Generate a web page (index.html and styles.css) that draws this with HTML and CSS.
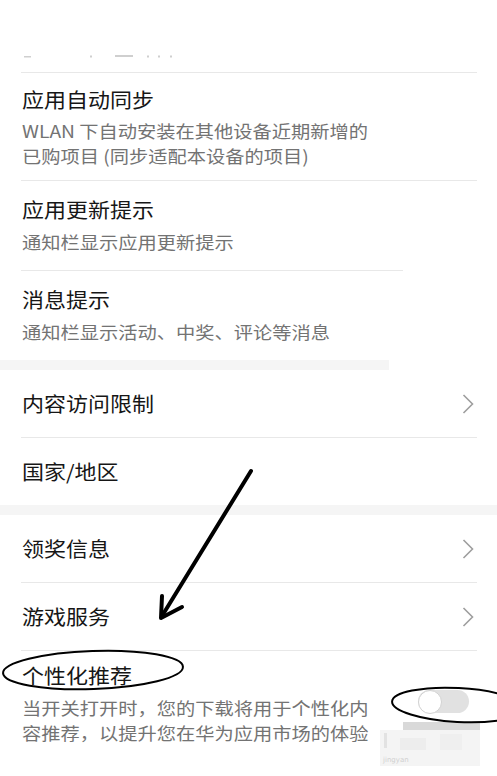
FILE: index.html
```html
<!DOCTYPE html>
<html lang="zh-CN">
<head>
<meta charset="utf-8">
<title>设置</title>
<link rel="stylesheet" href="styles.css">
</head>
<body>
<div class="page">
  <div class="top-space"></div>
  <div class="divider"></div>

  <div class="item item--first">
    <div class="title">应用自动同步</div>
    <div class="sub">WLAN 下自动安装在其他设备近期新增的<br>已购项目 (同步适配本设备的项目)</div>
  </div>
  <div class="divider"></div>

  <div class="item item--single">
    <div class="title">应用更新提示</div>
    <div class="sub">通知栏显示应用更新提示</div>
  </div>
  <div class="divider divider--short"></div>

  <div class="item item--single">
    <div class="title">消息提示</div>
    <div class="sub">通知栏显示活动、中奖、评论等消息</div>
  </div>
  <div class="band band--partial"></div>

  <div class="row">
    <span class="title">内容访问限制</span>
    <svg class="chevron" viewBox="0 0 12 20"><polyline points="1.5,1 10.5,10 1.5,19"/></svg>
  </div>
  <div class="divider"></div>

  <div class="row">
    <span class="title">国家/地区</span>
  </div>
  <div class="band"></div>

  <div class="row">
    <span class="title">领奖信息</span>
    <svg class="chevron" viewBox="0 0 12 20"><polyline points="1.5,1 10.5,10 1.5,19"/></svg>
  </div>
  <div class="divider"></div>

  <div class="row">
    <span class="title">游戏服务</span>
    <svg class="chevron" viewBox="0 0 12 20"><polyline points="1.5,1 10.5,10 1.5,19"/></svg>
  </div>
  <div class="divider"></div>

  <div class="item item--toggle">
    <div class="text">
      <div class="title">个性化推荐</div>
      <div class="sub">当开关打开时，您的下载将用于个性化内<br>容推荐，以提升您在华为应用市场的体验</div>
    </div>
    <div class="toggle"><span class="knob"></span></div>
  </div>
</div>

<svg class="overlay" viewBox="0 0 497 776" width="497" height="776">
  <g class="remnant">
    <rect x="24" y="56" width="7" height="1.5"/>
    <rect x="90" y="55.5" width="2" height="2"/>
    <rect x="115" y="55" width="18" height="2"/>
    <rect x="147" y="55.5" width="2" height="2"/>
    <rect x="158" y="55.5" width="2" height="2"/>
    <rect x="170" y="55.5" width="2" height="2"/>
  </g>
  <g class="mosaic">
    <rect x="380" y="730" width="100" height="36" fill="#f4f4f4"/>
    <rect x="400" y="738" width="26" height="12" fill="#ededed"/>
    <rect x="440" y="734" width="22" height="16" fill="#efefef"/>
    <rect x="384" y="733" width="3" height="15" fill="#e2e2e2"/>
    <rect x="403" y="722" width="77" height="8" fill="#d9d9d9"/>
  </g>
  <text x="383" y="762" class="wm">jingyan</text>
  <ellipse cx="93" cy="670" rx="90" ry="19" transform="rotate(-2 93 670)" class="mark"/>
  <ellipse cx="458" cy="705" rx="66" ry="17" transform="rotate(3 458 705)" class="mark"/>
  <line x1="251" y1="471" x2="162" y2="616" class="arrow"/>
  <path d="M162 596 L161 618 L182 607" class="arrow"/>
</svg>
</body>
</html>
```

FILE: styles.css
```css
html, body {
  margin: 0;
  padding: 0;
  background: #ffffff;
}

body {
  position: relative;
  width: 497px;
  height: 776px;
  overflow: hidden;
  font-family: "Noto Sans CJK SC", "Noto Sans", sans-serif;
}

.page {
  width: 497px;
}

.top-space {
  height: 72px;
}

.divider {
  height: 1px;
  background: #e8e8e8;
  margin: 0 20px 0 21px;
}

.divider--short {
  width: 382px;
  margin-right: 0;
}

.band {
  height: 10px;
  background: #f5f5f5;
}

.band--partial {
  width: 389px;
}

.title {
  display: inline-block;
  font-size: 20px;
  line-height: 26px;
  color: #161616;
  white-space: nowrap;
  transform: scaleX(1.1);
  transform-origin: left center;
}

.sub {
  font-size: 17.5px;
  line-height: 25px;
  color: #737373;
  white-space: nowrap;
  transform: scaleX(1.1);
  transform-origin: left center;
}

.item {
  padding: 14px 22px 12px 22px;
}

.item .title {
  display: block;
}

.item--first .sub {
  margin-top: 5px;
}

.item--single {
  padding: 16px 22px 16px 22px;
}

.item--single .sub {
  margin-top: 6px;
}

.row {
  box-sizing: border-box;
  height: 67px;
  padding: 0 23px 0 22px;
  display: flex;
  align-items: center;
  justify-content: space-between;
}

.chevron {
  width: 12px;
  height: 20px;
  fill: none;
  stroke: #9e9e9e;
  stroke-width: 1.6;
  stroke-linejoin: miter;
}

.item--toggle {
  display: flex;
  align-items: flex-start;
  justify-content: space-between;
  padding: 12px 28px 0 22px;
}

.item--toggle .sub {
  margin-top: 6px;
}

.toggle {
  margin-top: 27px;
  width: 51px;
  height: 23px;
  border-radius: 12px;
  background: #e1e1e1;
  display: flex;
  align-items: center;
}

.knob {
  box-sizing: border-box;
  width: 24px;
  height: 24px;
  border-radius: 50%;
  background: #ffffff;
  border: 1px solid #d2d2d2;
}

.overlay {
  position: absolute;
  top: 0;
  left: 0;
  pointer-events: none;
}

.remnant rect {
  fill: #cfcfcf;
}

.mark {
  fill: none;
  stroke: #000000;
  stroke-width: 2;
}

.arrow {
  fill: none;
  stroke: #000000;
  stroke-width: 4;
  stroke-linecap: round;
  stroke-linejoin: round;
}

.wm {
  font-family: "DejaVu Sans", sans-serif;
  font-size: 7px;
  fill: #d0d0d0;
}
```
